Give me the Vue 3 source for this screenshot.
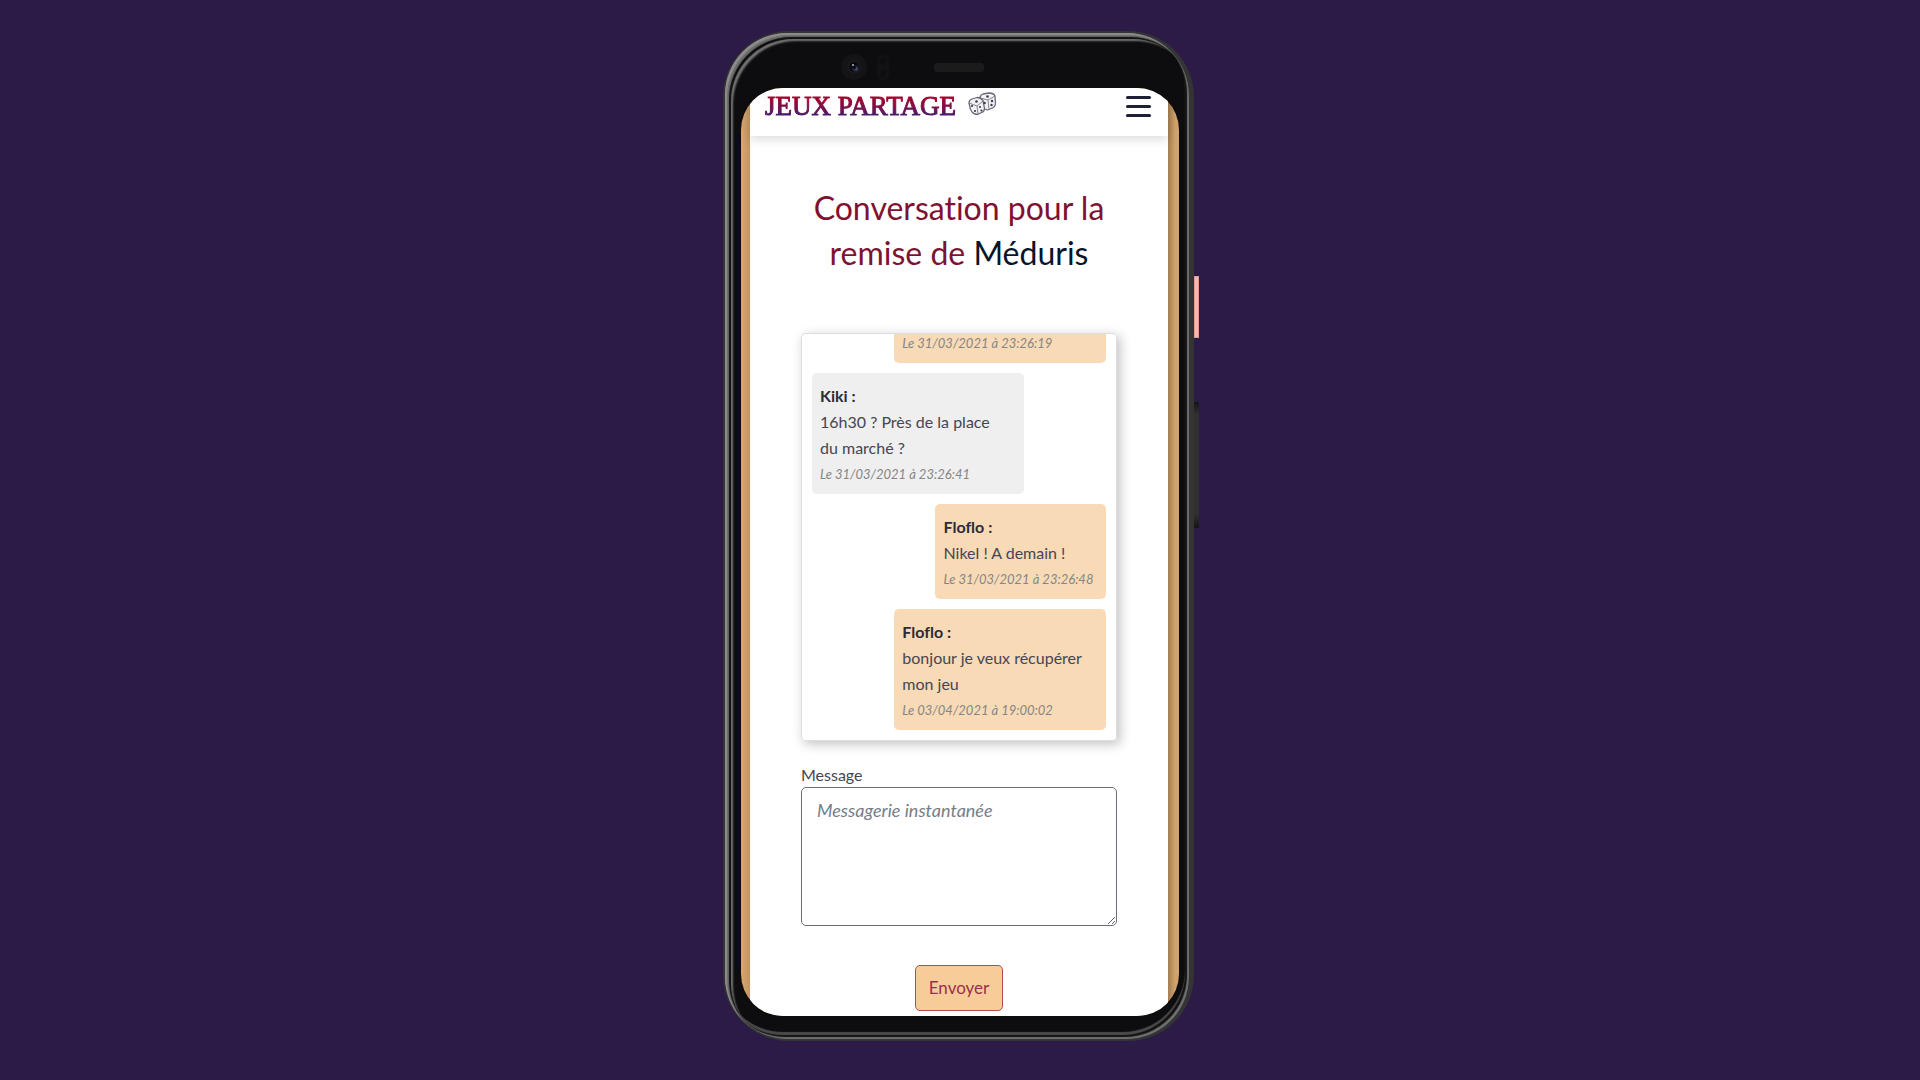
<script setup>
const messages = [
  { date: '31/03/2021 à 23:26:19', mine: true, wide: true },
  { author: 'Kiki', text: '16h30 ? Près de la place du marché ?', date: '31/03/2021 à 23:26:41', wide: true },
  { author: 'Floflo', text: 'Nikel ! A demain !', date: '31/03/2021 à 23:26:48', mine: true },
  { author: 'Floflo', text: 'bonjour je veux récupérer mon jeu', date: '03/04/2021 à 19:00:02', mine: true, wide: true }
]
</script>

<template>
  <div class="stage">
    <div class="device">
      <span class="key power"></span>
      <span class="key volume"></span>
      <div class="frame">
        <div class="bezel">
          <div class="sensors">
            <svg class="camera" viewBox="0 0 26 26" aria-hidden="true">
              <circle cx="13" cy="13" r="13" fill="#141416" />
              <circle cx="13" cy="13" r="7" fill="#1a1a1e" />
              <circle cx="13" cy="13" r="5" fill="#0b0c12" />
              <circle cx="14.5" cy="14.5" r="3" fill="#292c4a" />
              <circle cx="13" cy="13" r="2" fill="#0c0d16" />
              <circle cx="12" cy="11" r="1" fill="#b5b8bc" />
              <circle cx="15.5" cy="15" r="1" fill="#535980" />
            </svg>
            <svg class="proximity" viewBox="0 0 12 25" aria-hidden="true">
              <rect width="12" height="25" rx="5" fill="#121214" />
              <circle cx="6" cy="6" r="3.5" fill="#0e0e0f" />
              <circle cx="6" cy="19" r="3.5" fill="#0e0e0f" />
            </svg>
            <span class="speaker"></span>
          </div>
          <div class="screen">
            <div class="page">
              <header class="topbar">
                <a class="brand" href="#">
                  <span class="logo">JEUX PARTAGE</span>
                  <svg class="dice" viewBox="0 0 28 24" aria-hidden="true">
                    <g fill="#f1f1f4" stroke="#6a6b79" stroke-width="1.3" stroke-linejoin="round">
                      <path d="M12 6Q12 3 15 2l6-1q5 0 6 3l.5 8q-.5 3-3 4l-5 2-6-2z" />
                      <path d="m12 6 8 2 7-4M20 8l1 9" fill="none" stroke-width=".8" />
                      <path d="M1 11q0-3 3-4l5-1.500q4 0 6 3l1.500 8q0 3-3 4l-4 2q-3 0-5-2l-2-3z" />
                      <path d="m1 11 8 3 6-5M9 14l1 8" fill="none" stroke-width=".8" />
                    </g>
                    <g fill="#3c3d4c">
                      <circle cx="19.5" cy="4.500" r="1.3" />
                      <circle cx="16.500" cy="11" r="1.3" />
                      <circle cx="24" cy="9" r="1.2" />
                      <circle cx="23.500" cy="13" r="1.2" />
                      <circle cx="8.500" cy="9.500" r="1.3" />
                      <circle cx="4" cy="14" r="1.1" />
                      <circle cx="7" cy="19" r="1.1" />
                      <circle cx="12" cy="15" r="1.1" />
                      <circle cx="13.500" cy="18.500" r="1.1" />
                    </g>
                  </svg>
                </a>
                <button class="burger" type="button" aria-label="Menu">
                  <span></span><span></span><span></span>
                </button>
              </header>

              <main>
                <h1>
                  <span class="line">Conversation pour la</span>
                  <span>remise de </span><a href="#">Méduris</a>
                </h1>
                <section class="chat">
                  <article
                    v-for="m in messages"
                    :key="m.date"
                    class="msg"
                    :class="{ mine: m.mine, wide: m.wide }"
                  >
                    <strong v-if="m.author">{{ m.author }} :</strong>
                    <p v-if="m.text">{{ m.text }}</p>
                    <time>Le {{ m.date }}</time>
                  </article>
                </section>
                <form @submit.prevent>
                  <label for="message">Message</label>
                  <textarea id="message" placeholder="Messagerie instantanée"></textarea>
                  <button class="send" type="submit">Envoyer</button>
                </form>
              </main>
            </div>
          </div>
        </div>
      </div>
    </div>
  </div>
</template>

<style>
body {
  margin: 0;
  background: #2c1b47;
}
</style>

<style scoped>
* {
  box-sizing: border-box;
}

.stage {
  display: flex;
  align-items: center;
  justify-content: center;
  min-height: 100vh;
  padding: 0 3px 8px 0;
  font-family: Lato, "Open Sans", sans-serif;
  font-variant-ligatures: none;
  color: #444654;
}

.device {
  position: relative;
  width: 471px;
  max-width: 100%;
}

.key {
  position: absolute;
  left: 100%;
  width: 5px;
}

.power {
  top: 245px;
  height: 62px;
  background: #f5b9aa;
  border: 1px solid #dc9c92;
}

.volume {
  top: 371px;
  height: 126px;
  background: linear-gradient(#141414, #303030 12px, #303030 112px, #141414);
}

.frame {
  position: relative;
  padding: 2px 5px 2px 2px;
  border-radius: 66px;
  background: #343435;
}

.bezel {
  padding: 9px 10px 23px 16px;
  border-radius: 62px;
  background: #0d0d0f;
  box-shadow:
    inset 2px 2px 1px #8d8d8e,
    inset -2px -2px 1px #707072,
    inset 4px 4px 1px #6b6b6c,
    inset 6px 6px 1px #0b0b0c,
    inset 9px 9px 2px -1px #777776,
    inset -4px -4px 1px #111112,
    inset -4px -7px 1px #4c4c4d;
}

.sensors {
  display: flex;
  align-items: center;
  height: 46px;
  padding: 4px 0 0 100px;
}

.camera {
  width: 26px;
  height: 26px;
}

.proximity {
  width: 12px;
  height: 25px;
  margin-left: 10px;
}

.speaker {
  width: 50px;
  height: 9px;
  margin-left: 45px;
  border-radius: 3px;
  background: #1b1b1b;
}

.screen {
  overflow: hidden;
  padding: 0 11px 0 9px;
  border-radius: 42px;
  background: linear-gradient(90deg, #d9a76e, #c49564 9px, #a98254 428px, #d0a26b 434px, #d3a46d);
}

.page {
  background: #fff;
}

.topbar {
  display: flex;
  align-items: flex-start;
  justify-content: space-between;
  height: 48px;
  padding: 0 17px 0 15px;
  box-shadow: 0 3px 10px #00000026;
}

.brand {
  display: flex;
  gap: 12px;
  text-decoration: none;
}

.logo {
  font: 27px/36px "Liberation Serif", serif;
  color: transparent;
  background: linear-gradient(#b00024 15%, #8b0d3e 45%, #401b70 80%);
  background-clip: text;
  -webkit-text-stroke: 1px transparent;
}

.dice {
  width: 28px;
  height: 24px;
  margin-top: 4px;
}

.burger {
  display: flex;
  flex-direction: column;
  gap: 6px;
  width: 25px;
  padding: 8px 0 0;
  border: 0;
  background: none;
}

.burger span {
  width: 25px;
  height: 3px;
  border-radius: 2px;
  background: #1c2136;
}

main {
  padding: 49px 51px 5px;
}

h1 {
  margin: 0 0 58px;
  font-size: 32px;
  font-weight: 400;
  line-height: 45px;
  text-align: center;
  color: #7f1231;
}

h1 .line {
  display: block;
}

h1 a {
  color: #07152a;
  text-decoration: none;
}

.chat {
  display: flex;
  flex-direction: column;
  justify-content: flex-end;
  gap: 10px;
  height: 408px;
  overflow: hidden;
  padding: 10px;
  border: 1px solid #dedede;
  border-radius: 4px;
  box-shadow: 3px 3px 12px #00000040;
}

.msg {
  flex: none;
  align-self: flex-start;
  min-width: 58%;
  max-width: 72%;
  padding: 10px 8px 7px;
  border-radius: 5px;
  background: #efefef;
  font-size: 16px;
  line-height: 26px;
}

.msg.mine {
  align-self: flex-end;
  background: #f8dab7;
}

.msg.wide {
  width: 72%;
  padding-right: 16px;
}

.msg strong {
  display: block;
  color: #2b2c38;
}

.msg p {
  margin: 0;
}

.msg time {
  display: block;
  font-size: 13px;
  font-style: italic;
  line-height: 26px;
  white-space: nowrap;
  color: #858585;
}

form {
  display: flex;
  flex-direction: column;
  margin-top: 22px;
}

label {
  font-size: 16px;
  line-height: 24px;
}

textarea {
  width: 100%;
  height: 139px;
  padding: 9px 15px;
  border: 1px solid #6d6f78;
  border-radius: 5px;
  background: #fff;
  font: 18px/27px Lato, "Open Sans", sans-serif;
}

textarea::placeholder {
  font-style: italic;
  color: #747e87;
}

.send {
  align-self: center;
  width: 88px;
  height: 46px;
  margin-top: 39px;
  padding: 0;
  border: 1px solid #a84e55;
  border-radius: 5px;
  background: #f7cc98;
  font: 17px/24px Lato, "Open Sans", sans-serif;
  color: #99304a;
}
</style>
